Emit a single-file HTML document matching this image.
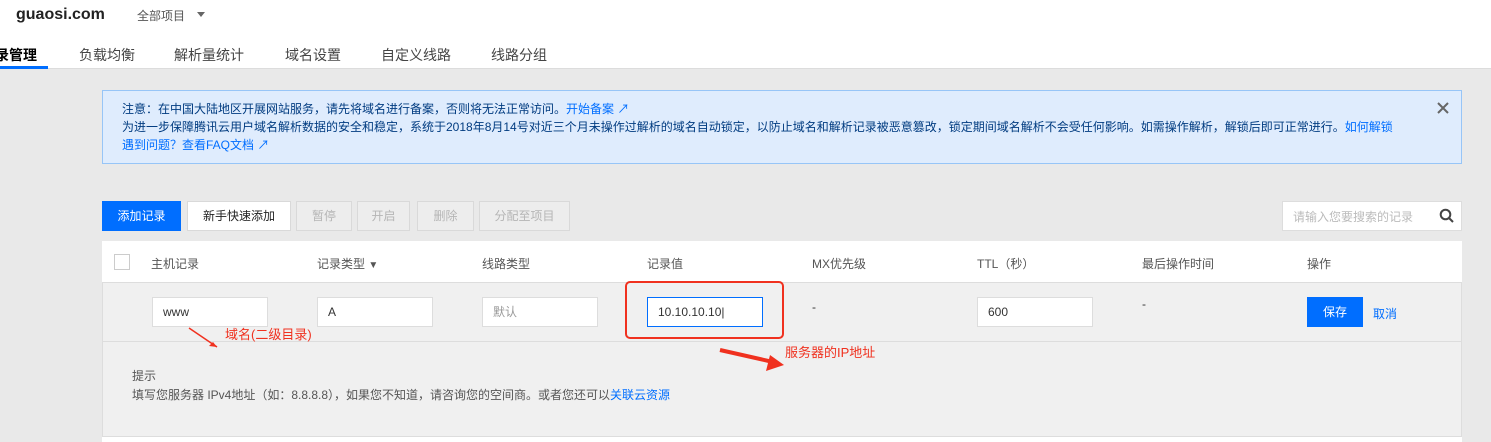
<!DOCTYPE html>
<html><head><meta charset="utf-8"><style>
*{margin:0;padding:0;box-sizing:border-box}
body{width:1491px;height:442px;overflow:hidden;background:#e9e9e9;font-family:"Liberation Sans","Noto Sans CJK SC",sans-serif;font-size:12px;color:#333;position:relative}
.a{position:absolute;white-space:nowrap}
.top{position:absolute;left:0;top:0;width:1491px;height:69px;background:#fff;border-bottom:1px solid #dcdcdc}
.tab{position:absolute;top:45px;font-size:14px;color:#444}
.btn{position:absolute;top:201px;height:30px;line-height:28px;text-align:center;border:1px solid #d9d9d9;background:#ededed;color:#b5b5b5;font-size:12px}
.in{position:absolute;top:297px;height:30px;border:1px solid #ddd;background:#fff;line-height:28px;padding-left:10px;font-size:12px;color:#333}
.th{position:absolute;top:255px;color:#555;font-size:12px}
.blue{color:#006eff}
</style></head><body>
<div class="top">
<div class="a" style="left:16px;top:6px;font-size:16px;font-weight:bold;color:#222">guaosi.com</div>
<div class="a" style="left:137px;top:7px;font-size:12px;color:#555">全部项目</div>
<div class="a" style="left:197px;top:12px;width:0;height:0;border-left:4px solid transparent;border-right:4px solid transparent;border-top:5px solid #666"></div>
<div class="tab" style="left:-5px;color:#000;font-weight:bold">录管理</div>
<div style="position:absolute;left:0;top:66px;width:48px;height:3px;background:#006eff"></div>
<div class="tab" style="left:79px">负载均衡</div>
<div class="tab" style="left:174px">解析量统计</div>
<div class="tab" style="left:285px">域名设置</div>
<div class="tab" style="left:381px">自定义线路</div>
<div class="tab" style="left:491px">线路分组</div>
</div>
<div style="position:absolute;left:102px;top:90px;width:1360px;height:74px;background:#dfecfd;border:1px solid #97c5f7"></div>
<div class="a" style="left:122px;top:100px;line-height:18px;color:#003b80">注意：在中国大陆地区开展网站服务，请先将域名进行备案，否则将无法正常访问。<span class="blue">开始备案 ↗</span><br>为进一步保障腾讯云用户域名解析数据的安全和稳定，系统于2018年8月14号对近三个月未操作过解析的域名自动锁定，以防止域名和解析记录被恶意篡改，锁定期间域名解析不会受任何影响。如需操作解析，解锁后即可正常进行。<span class="blue">如何解锁</span><br><span class="blue">遇到问题？查看FAQ文档 ↗</span></div>
<svg class="a" style="left:1437px;top:102px" width="12" height="12"><path d="M1 1l10 10M11 1L1 11" stroke="#666" stroke-width="2"/></svg>
<div class="btn" style="left:102px;width:79px;background:#006eff;border-color:#006eff;color:#fff">添加记录</div>
<div class="btn" style="left:187px;width:104px;background:#fff;color:#222">新手快速添加</div>
<div class="btn" style="left:296px;width:56px">暂停</div>
<div class="btn" style="left:357px;width:53px">开启</div>
<div class="btn" style="left:417px;width:57px">删除</div>
<div class="btn" style="left:479px;width:91px">分配至项目</div>
<div style="position:absolute;left:1282px;top:201px;width:180px;height:30px;background:#fff;border:1px solid #ddd"></div>
<div class="a" style="left:1293px;top:208px;color:#bbb">请输入您要搜索的记录</div>
<svg class="a" style="left:1439px;top:208px" width="15" height="15"><circle cx="6.5" cy="6.5" r="4.8" stroke="#444" stroke-width="2" fill="none"/><path d="M10 10l4 4" stroke="#444" stroke-width="2"/></svg>
<div style="position:absolute;left:102px;top:241px;width:1360px;height:201px;background:#f0f0f0;border:1px solid #ddd"></div>
<div style="position:absolute;left:102px;top:241px;width:1360px;height:42px;background:#fff;border-bottom:1px solid #ddd"></div>
<div style="position:absolute;left:102px;top:341px;width:1360px;height:1px;background:#ddd"></div>
<div style="position:absolute;left:102px;top:436px;width:1360px;height:6px;background:#fff;border-top:1px solid #ddd"></div>
<div style="position:absolute;left:114px;top:254px;width:16px;height:16px;border:1px solid #ccc;background:#fff"></div>
<div class="th" style="left:151px">主机记录</div>
<div class="th" style="left:317px">记录类型 <span style="font-size:10px">▼</span></div>
<div class="th" style="left:482px">线路类型</div>
<div class="th" style="left:647px">记录值</div>
<div class="th" style="left:812px">MX优先级</div>
<div class="th" style="left:977px">TTL（秒）</div>
<div class="th" style="left:1142px">最后操作时间</div>
<div class="th" style="left:1307px">操作</div>
<div class="in" style="left:152px;width:116px">www</div>
<div class="in" style="left:317px;width:116px">A</div>
<div class="in" style="left:482px;width:116px;color:#999">默认</div>
<div class="in" style="left:647px;width:116px;border-color:#006eff">10.10.10.10|</div>
<div class="a" style="left:812px;top:300px">-</div>
<div class="in" style="left:977px;width:116px">600</div>
<div class="a" style="left:1142px;top:297px">-</div>
<div class="a" style="left:1307px;top:297px;width:56px;height:30px;background:#006eff;color:#fff;text-align:center;line-height:30px">保存</div>
<div class="a" style="left:1373px;top:305px;color:#006eff">取消</div>
<div style="position:absolute;left:625px;top:281px;width:159px;height:58px;border:2px solid #f0311f;border-radius:5px"></div>
<div class="a" style="left:225px;top:324px;font-size:13px;color:#f0311f">域名(二级目录)</div>
<svg class="a" style="left:185px;top:325px" width="40" height="25"><path d="M4 3L32 22" stroke="#f0311f" stroke-width="1.5"/><path d="M32 22l-8-1 4-4z" fill="#f0311f"/></svg>
<svg class="a" style="left:718px;top:345px" width="70" height="30"><path d="M2 5L55 17" stroke="#f0311f" stroke-width="4"/><path d="M66 20L48 26 52 10z" fill="#f0311f"/></svg>
<div class="a" style="left:785px;top:342px;font-size:13px;color:#f0311f">服务器的IP地址</div>
<div class="a" style="left:132px;top:367px;color:#555">提示</div>
<div class="a" style="left:132px;top:386px;color:#555">填写您服务器 IPv4地址（如：8.8.8.8），如果您不知道，请咨询您的空间商。或者您还可以<span class="blue">关联云资源</span></div>
</body></html>
